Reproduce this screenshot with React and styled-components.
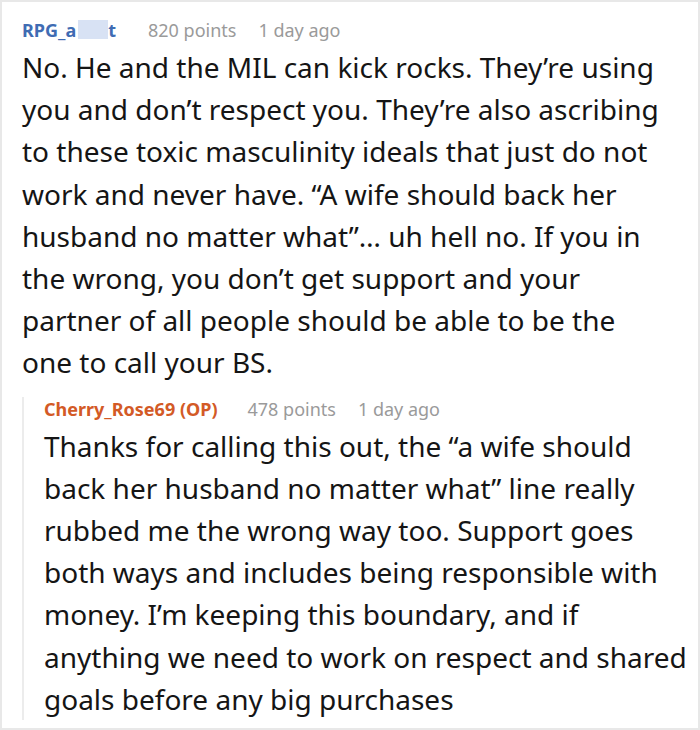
import React from "react";
import styled, { createGlobalStyle } from "styled-components";

const GlobalStyle = createGlobalStyle`
  html, body {
    margin: 0;
    padding: 0;
    background: #ffffff;
  }
  body {
    font-family: "Noto Sans", "Open Sans", sans-serif;
  }
`;

const Frame = styled.div`
  width: 700px;
  height: 730px;
  box-sizing: border-box;
  border: 2px solid #e8e8e8;
  padding: 16px 20px 0 20px;
  overflow: hidden;
  background: #fff;
`;

const Comment = styled.div`
  display: flex;
  flex-direction: column;
`;

const Meta = styled.div`
  display: flex;
  align-items: baseline;
  gap: 22px;
  font-size: 18px;
  line-height: 24px;
  color: #9a9a9a;
  white-space: nowrap;
`;

const Author = styled.span`
  font-weight: 700;
  color: ${({ $op }) => ($op ? "#d35a26" : "#3f6cb3")};
  margin-right: ${({ $gap }) => $gap || 0}px;
`;

const Blur = styled.span`
  display: inline-block;
  width: 30px;
  height: 19px;
  vertical-align: -2px;
  margin-left: 2px;
  background: #d8e2f4;
`;

const Body = styled.p`
  margin: 4px 0 0 0;
  font-size: 28px;
  line-height: 42.2px;
  color: #151515;
  white-space: nowrap;
`;

const Reply = styled.div`
  margin: 13px 0 0 0;
  padding-left: 20px;
  border-left: 2px solid #ececec;
  display: flex;
  flex-direction: column;
`;

export default function App() {
  return (
    <>
      <GlobalStyle />
      <Frame>
        <Comment>
          <Meta>
            <Author $gap={10}>
              RPG_a<Blur />t
            </Author>
            <span>820 points</span>
            <span>1 day ago</span>
          </Meta>
          <Body>
            No. He and the MIL can kick rocks. They’re using
            <br />
            you and don’t respect you. They’re also ascribing
            <br />
            to these toxic masculinity ideals that just do not
            <br />
            work and never have. “A wife should back her
            <br />
            husband no matter what”… uh hell no. If you in
            <br />
            the wrong, you don’t get support and your
            <br />
            partner of all people should be able to be the
            <br />
            one to call your BS.
          </Body>
        </Comment>
        <Reply>
          <Meta>
            <Author $op $gap={8}>Cherry_Rose69 (OP)</Author>
            <span>478 points</span>
            <span>1 day ago</span>
          </Meta>
          <Body>
            Thanks for calling this out, the “a wife should
            <br />
            back her husband no matter what” line really
            <br />
            rubbed me the wrong way too. Support goes
            <br />
            both ways and includes being responsible with
            <br />
            money. I’m keeping this boundary, and if
            <br />
            anything we need to work on respect and shared
            <br />
            goals before any big purchases
          </Body>
        </Reply>
      </Frame>
    </>
  );
}
